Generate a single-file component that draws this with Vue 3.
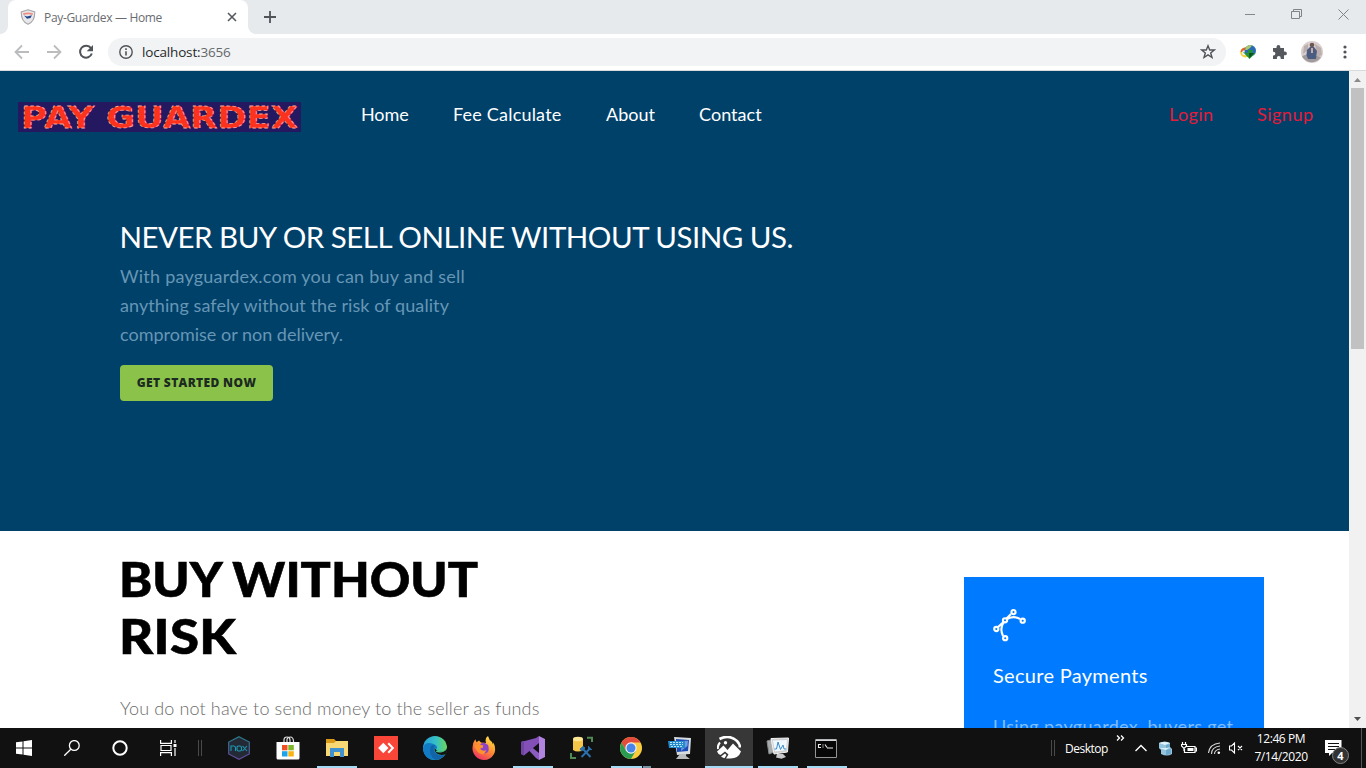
<script setup>
const nav = [
  { label: 'Home', cls: 'n-home' },
  { label: 'Fee Calculate', cls: 'n-fee' },
  { label: 'About', cls: 'n-about' },
  { label: 'Contact', cls: 'n-contact' }
]
</script>

<template>
  <div class="screen">
    <div class="tabstrip">
      <div class="lead"></div>
      <div class="tab">
        <svg class="fav" width="16" height="16" viewBox="0 0 16 16">
          <path d="M8 .8 14.8 3C14.8 9 13 13.300 8 15.300 3 13.300 1.200 9 1.200 3Z" fill="#e8e8ea" stroke="#a6a6a9" stroke-width="1.100" />
          <path d="M3 4.300Q8 2.500 13 4.300L12.500 6Q8 4.500 3.500 6Z" fill="#ef8d85" />
          <path d="M4 6.500 7 7.500 12 6.300 10.500 9 7 9.800Z" fill="#21468c" />
        </svg>
        <span class="tabtitle">Pay-Guardex — Home</span>
        <svg class="tabclose" width="10" height="10" viewBox="0 0 10 10"><path d="M1 1 9 9M9 1 1 9" stroke="#55585c" stroke-width="1.600" /></svg>
      </div>
      <div class="trail">
        <svg class="plus" width="12" height="12" viewBox="0 0 12 12"><path d="M6 0V12M0 6H12" stroke="#505357" stroke-width="1.800" /></svg>
        <div class="wincontrols">
          <svg width="10" height="10" viewBox="0 0 10 10"><path d="M0 5.500H10" stroke="#85888b" /></svg>
          <svg width="11" height="11" viewBox="0 0 11 11" fill="none" stroke="#808386"><path d="M.5 2.500H8.500V9.500H.5ZM2.500 2.500V.5H10.500V7.500H8.500" /></svg>
          <svg width="11" height="11" viewBox="0 0 11 11"><path d="M.5 .5 10.500 10.500M10.500 .5 .5 10.500" stroke="#808386" /></svg>
        </div>
      </div>
    </div>

    <div class="toolbar">
      <div class="navicons">
        <svg width="16" height="16" viewBox="0 0 16 16" fill="none" stroke="#babcbe" stroke-width="1.800"><path d="M15 8H2M8 1.500 1.500 8 8 14.500" /></svg>
        <svg width="16" height="16" viewBox="0 0 16 16" fill="none" stroke="#babcbe" stroke-width="1.800"><path d="M1 8H14M8 1.500 14.500 8 8 14.500" /></svg>
        <svg width="16" height="16" viewBox="0 0 16 16"><path d="M13 4.200A6 6 0 1 0 13.800 9.500" fill="none" stroke="#505357" stroke-width="2" /><path d="M15 1V7.300H8.700Z" fill="#505357" /></svg>
      </div>
      <div class="omnibox">
        <svg width="14" height="14" viewBox="0 0 14 14"><circle cx="7" cy="7" r="6.200" fill="none" stroke="#505357" stroke-width="1.400" /><path d="M7 6.200V10.500M7 3.300V4.900" stroke="#505357" stroke-width="1.600" /></svg>
        <span class="url">localhost:<i>3656</i></span>
        <svg class="star" width="16" height="16" viewBox="0 0 16 16"><path d="M8 1.800 9.700 6H14.300L10.700 8.900 12 13.500 8 10.900 4 13.500 5.300 8.900 1.700 6H6.300Z" fill="none" stroke="#505357" stroke-width="1.400" /></svg>
      </div>
      <div class="exts">
        <svg width="16" height="16" viewBox="0 0 16 16">
          <circle cx="5.300" cy="8.500" r="5" fill="#f2d23a" /><path d="M.5 8A5 5 0 0 1 7 3.700L5 8Z" fill="#e5602f" /><circle cx="4.500" cy="8.800" r="2.500" fill="#e9f3f7" />
          <circle cx="10.300" cy="6.800" r="5.700" fill="#2c69b3" /><path d="M6 3Q9 0 12 1.500L10 4 7 6 5 6Z" fill="#a7c970" /><path d="M3 8 8 9 8 6H13L12.500 9H15.500L9.500 15Z" fill="#229238" /><path d="M9 9 14 9 9.500 14Z" fill="#0d5120" />
        </svg>
        <svg width="16" height="16" viewBox="0 0 16 16"><path d="M1 4H4.500V3A1.900 1.900 0 0 1 8.300 3V4H12V7.500H13A1.900 1.900 0 0 1 13 11.300H12V15H8.700V14A1.900 1.900 0 0 0 4.900 14V15H1V11.500H1.500A1.900 1.900 0 0 0 1.500 7.700H1Z" fill="#55595e" /></svg>
        <svg width="22" height="22" viewBox="0 0 22 22">
          <circle cx="11" cy="11" r="11" fill="#d8cfce" /><path d="M3 5 7 3V9L2 13ZM14 3 20 7 21 14 16 16Z" fill="#bcaead" /><path d="M1 15 7 13 16 15 20 16A11 11 0 0 1 2 17Z" fill="#a19a9d" /><path d="M6 9 9 6 13 6 16 10 15 18 7 18 5.500 14Z" fill="#4a5c82" /><circle cx="11" cy="4" r="2.300" fill="#6d5752" /><path d="M10 7H12V12H10Z" fill="#c9aba2" />
        </svg>
        <svg width="4" height="14" viewBox="0 0 4 14" fill="#505357"><circle cx="2" cy="2" r="1.600" /><circle cx="2" cy="7" r="1.600" /><circle cx="2" cy="12" r="1.600" /></svg>
      </div>
    </div>

    <div class="viewport">
      <div class="page">
        <section class="hero">
          <header class="menu">
            <svg class="logo" width="283" height="30" viewBox="0 0 283 30">
              <rect width="283" height="30" fill="#241861" />
              <g class="logotext">
                <text x="3" y="26" textLength="73" lengthAdjust="spacingAndGlyphs">PAY</text>
                <text x="88" y="26" textLength="192" lengthAdjust="spacingAndGlyphs">GUARDEX</text>
              </g>
            </svg>
            <nav>
              <a v-for="n in nav" :key="n.label" :class="n.cls">{{ n.label }}</a>
            </nav>
            <div class="auth"><a class="login">Login</a><a class="signup">Signup</a></div>
          </header>
          <div class="pitch">
            <h1>NEVER BUY OR SELL ONLINE WITHOUT USING US.</h1>
            <p class="p1">With payguardex.com you can buy and sell</p>
            <p class="p2">anything safely without the risk of quality</p>
            <p class="p3">compromise or non delivery.</p>
            <button><span>GET STARTED NOW</span></button>
          </div>
        </section>
        <section class="content">
          <div class="risk">
            <h2><span class="h2a">BUY WITHOUT</span><br><span class="h2b">RISK</span></h2>
            <p>You do not have to send money to the seller as funds</p>
          </div>
          <div class="card">
            <svg width="34" height="34" viewBox="0 0 34 34" fill="none" stroke="#fff" stroke-width="2.100">
              <path d="M5 18 10.500 13M13.500 9.500 18 5M13.500 10.500Q20 6 27 10M10.500 13.500Q6.500 20 10 27" />
              <circle cx="3.300" cy="20" r="2.100" /><circle cx="12" cy="11.300" r="2.100" /><circle cx="20.500" cy="3.100" r="2.100" /><circle cx="29.700" cy="11.700" r="2.100" /><circle cx="12.200" cy="29.200" r="2.100" />
            </svg>
            <h3>Secure Payments</h3>
            <p>Using payguardex, buyers get</p>
          </div>
        </section>
      </div>
      <div class="scrollbar">
        <svg width="17" height="17" viewBox="0 0 17 17"><path d="M5 11 8.500 7 12 11Z" fill="#8b8b8b" /></svg>
        <div class="thumb"></div>
        <svg class="down" width="17" height="17" viewBox="0 0 17 17"><path d="M5 6 8.500 10 12 6Z" fill="#505050" /></svg>
      </div>
    </div>

    <div class="taskbar">
      <div class="sys">
        <span><svg width="16" height="16" viewBox="0 0 16 16" fill="#fff"><path d="M0 2.300 6.500 1.400V7.500H0ZM7.500 1.200 16 0V7.500H7.500ZM0 8.500H6.500V14.600L0 13.700ZM7.500 8.500H16V16L7.500 14.800Z" /></svg></span>
        <span><svg width="16" height="16" viewBox="0 0 16 16" fill="none" stroke="#fff" stroke-width="1.300"><circle cx="10.300" cy="5.500" r="4.900" /><path d="M6.800 9.200 .3 15.700" /></svg></span>
        <span><svg width="16" height="16" viewBox="0 0 16 16"><circle cx="8" cy="8" r="6.700" fill="none" stroke="#fff" stroke-width="2" /></svg></span>
        <span><svg width="17" height="16" viewBox="0 0 17 16" fill="none" stroke="#fff" stroke-width="1.200"><path d="M.6 0V3.400H11.400V0M.6 16V12.600H11.400V16M1 5.500H11V10.500H1ZM15 0V3M15 8V16" /><path d="M13.500 4H16.500V7H13.500Z" fill="#fff" stroke="none" /></svg></span>
        <i class="grip"></i>
      </div>
      <div class="apps">
        <span><svg width="22" height="24" viewBox="0 0 22 24"><defs><linearGradient id="nx" y2="1" x2="0"><stop stop-color="#287f8c" /><stop offset="1" stop-color="#65479d" /></linearGradient></defs><path d="M11 .7 21.300 6V18L11 23.300 .7 18V6Z" fill="#242936" stroke="url(#nx)" stroke-width="1.200" /><path d="M3 15V10H6Q7.500 10 7.500 12V15M9 11Q9 10 10.500 10H12Q13.500 10 13.500 12V13.500Q13.500 15 12 15H10.500Q9 15 9 13.500ZM14.500 10 19 15M19 10 14.500 15" fill="none" stroke="#1a9cb4" stroke-width="1.100" /></svg></span>
        <span class="store"><svg width="24" height="24" viewBox="0 0 24 24"><path d="M8 7V4Q8 1 11 1T14 4V7M11 7V3Q12 1 14.500 1T17.500 5V7" fill="none" stroke="#ddd" stroke-width="1.200" /><path d="M.5 6H23.500V22Q23.500 23.500 22 23.500H2Q.5 23.500 .5 22Z" fill="#fff" /><path d="M6 9H11.500V14.300H6Z" fill="#ee5123" /><path d="M12.300 9H17.800V14.300H12.300Z" fill="#7eb92b" /><path d="M6 15.200H11.500V20.500H6Z" fill="#1ba5e8" /><path d="M12.300 15.200H17.800V20.500H12.300Z" fill="#f9b414" /></svg></span>
        <span class="run"><svg width="22" height="20" viewBox="0 0 22 20"><path d="M0 1H8L10 3H21V18H0Z" fill="#d99a18" /><path d="M0 5H8L10 3H22V18H0Z" fill="#f8d775" /><path d="M4 10H18V19H14V14H8V19H4Z" fill="#3f91d0" /></svg></span>
        <span><svg width="24" height="24" viewBox="0 0 24 24"><path d="M0 0H24V24H0Z" fill="#f94639" /><path d="M9.300 6.800 14.500 12 9.300 17.200 4.100 12ZM13.500 8 15 6.500 20.200 12 15 17.500 13.500 16 17.400 12Z" fill="#fff" /></svg></span>
        <span><svg width="24" height="24" viewBox="0 0 24 24"><defs><linearGradient id="ed" x2="1"><stop stop-color="#249edb" /><stop offset=".55" stop-color="#37c1c5" /><stop offset="1" stop-color="#6bd85b" /></linearGradient></defs><circle cx="12" cy="12" r="12" fill="url(#ed)" /><path d="M0 12Q2 5.500 9 7.500 15 9 14 13 13 12 11.700 12.500 11 17 16 19 20 20 22.500 18 18 24 12 24 1 24 0 12Z" fill="#117bc3" /><path d="M8 10Q4.500 20 13 23.900 19.500 23.300 22.500 18 20 20 16 19 10 17 10.500 12 11 10.300 12.500 9.700 10 8.500 8 10Z" fill="#1264a9" /><path d="M11.700 12Q13.800 15.300 18 15.600 22.500 15.500 24 12V15L22.600 18.300Q19 19.500 16 18.600 11 16.500 11.700 12Z" fill="#111" /><path d="M12.800 15.700Q15 17 19 16.200 23 15.300 24 12Q23 14.500 20 15Q15 15.600 14 14Z" fill="#4cc585" /></svg></span>
        <span><svg width="24" height="24" viewBox="0 0 24 24"><defs><linearGradient id="ff" x1=".8" x2=".25" y2="1"><stop stop-color="#ffe94d" /><stop offset=".45" stop-color="#ff9630" /><stop offset="1" stop-color="#ec2e65" /></linearGradient></defs><path d="M12 24A11.500 11.500 0 0 1 .6 11Q1 6 3.300 3.300L4.500 6.300 7 4.500 9 6.500 14 7Q12.500 2 16 0 17 4 20 6L21 8.500 21.500 6.500Q24.500 13 22 18 18.500 24 12 24Z" fill="url(#ff)" /><path d="M7 13Q6.500 7.500 12 6.500L16 9Q18.500 16 13 17.500 8 18 7 13Z" fill="#8b43c7" /><path d="M2 9 7 8.500 11.500 9.500 10.500 12 8 12.500Q9 15.500 14.500 14.300L12 18Q5.500 19.500 2 9Z" fill="#ff922d" /></svg></span>
        <span class="run"><svg width="24" height="24" viewBox="0 0 24 24"><path d="M0 6 3 5 18 17V24L15 22Z" fill="#8a5cc0" /><path d="M0 6 3 8.500V15.500L0 18 3 19.500 18 7V0L15 2Z" fill="#8350b8" /><path d="M0 6 3 5V19.500L0 18Z" fill="#7044a1" /><path d="M18 0 24 3V21L18 24Z" fill="#b083df" /></svg></span>
        <span><svg width="24" height="24" viewBox="0 0 24 24"><path d="M3 3V14Q7.500 17 13 14V3Z" fill="#f5c547" /><ellipse cx="8" cy="3" rx="5" ry="2.300" fill="#ffe891" /><path d="M17 1.700H22V6M1 17V22H6" fill="none" stroke="#4f8a54" stroke-width="2" /><path d="M12 12 20.500 21M20 12.500 11.500 21" stroke="#2b70ad" stroke-width="2" /><path d="M10 13 13 10.500 15 12 11.500 15ZM18.500 10V13.500H22" fill="#2b70ad" stroke="#2b70ad" stroke-width="1" /></svg></span>
        <span class="run multi"><svg width="24" height="24" viewBox="0 0 24 24"><circle cx="12" cy="12" r="11" fill="#f9cd3d" /><path d="M2.500 6.500A11 11 0 0 1 21.500 6.500H12L7.200 14.700Z" fill="#e34b3d" /><path d="M2.500 6.500 7.200 14.700 16.700 14.700 12 23A11 11 0 0 1 2.500 6.500Z" fill="#2a9c51" /><circle cx="12" cy="12" r="5.700" fill="#f3f3f3" /><circle cx="12" cy="12" r="4.500" fill="#4885e9" /></svg></span>
        <span><svg width="24" height="24" viewBox="0 0 24 24"><path d="M6 1 23 2 22 18 9 19Z" fill="#d7dce1" /><path d="M8 3 21 4 20 15 9 16Z" fill="#1c4bb5" /><path d="M14 5 20 4.800 19.500 10 13 15Z" fill="#6c9be2" /><path d="M0 5H17V12H1Z" fill="#258bcc" /><path d="M2 6.500H15M2 8.500H15M3 10.500H14" stroke="#b7e4fa" stroke-width="1" stroke-dasharray="2 1" /><path d="M12 18H18V20L22 23H8Z" fill="#b9bcbe" /></svg></span>
        <span class="run active"><svg width="24" height="24" viewBox="0 0 24 24"><path d="M2.500 3Q12-2 20 5 23 8 23 11.500" stroke="#fff" stroke-width="2.600" fill="none" /><path d="M1 13Q.3 9.500 3 6.500" stroke="#fff" stroke-width="2" fill="none" /><path d="M0 15.500 6.500 9.500 10.500 14 16 7.500 24 15.500Q21.500 22.500 13.500 22.500H9L11.500 18.500 8 15.500 3.500 19Q1 18 0 15.500Z" fill="#fff" /><path d="M4 20.500 8 17.500 9.500 19 7.500 22.300Q5.500 21.800 4 20.500Z" fill="#fff" /><circle cx="8.500" cy="6.800" r="1.700" fill="#fff" /></svg></span>
        <span class="run"><svg width="24" height="22" viewBox="0 0 24 22"><path d="M1 4 8 2V15L3 17Z" fill="#a9acac" stroke="#85898b" /><path d="M5 1.500 22.500 1 21.500 15 8 17Z" fill="#cfd2d2" stroke="#f4f4f4" /><path d="M7 3.500 21 3 20 13 9 14.500Z" fill="#f1f8ff" /><path d="M8.500 12H10.500L12 5 14.500 12.500 17 8 18 12H20" fill="none" stroke="#388dcb" /><path d="M11 17H17L20 20 15.500 21.800 10 20.500Z" fill="#c7c9ca" /></svg></span>
        <span class="run cmd"><svg width="22" height="19" viewBox="0 0 22 19"><path d="M.5 .5H21.500V18.500H.5Z" fill="#070707" stroke="#959595" /><path d="M1 .5H21V2H1Z" fill="#d4d7d9" /><path d="M6 5.500H3.500V8.500H6M8 5.500V6.500M8 7.500V8.500M10 5.500 12 8.500M12 9H18" fill="none" stroke="#eee" stroke-width="1.100" /></svg></span>
      </div>
      <div class="tray">
        <i class="grip"></i>
        <span class="desktop">Desktop</span>
        <svg class="chev" width="9" height="6" viewBox="0 0 9 6" fill="none" stroke="#fff" stroke-width="1.300"><path d="M1 .5 3.500 3 1 5.500M5 .5 7.500 3 5 5.500" /></svg>
        <svg class="up" width="12" height="8" viewBox="0 0 12 8" fill="none" stroke="#fff" stroke-width="1.400"><path d="M.5 7 6 1.500 11.500 7" /></svg>
        <svg class="db" width="14" height="15" viewBox="0 0 14 15"><path d="M1 2Q7-1 12 2V6L14 8V13Q9 16 3 13V9L1 7Z" fill="#94c5df" /><path d="M1 2Q6 0 12 2L7 4ZM1 7H7L12 6 8 9Z" fill="#e0f4fd" /><path d="M8 4V7L12 6V3ZM8 9V14L13 13V8Z" fill="#6da9ca" /></svg>
        <svg class="bat" width="16" height="12" viewBox="0 0 16 12" fill="none" stroke="#fff" stroke-width="1.200"><path d="M5 4.500H14V10.500H3.500V7M14 6H15.500V9H14M1.500 0V2M4.500 0V2M.5 2.500H5.500V4L3.500 6H2.500L.5 4ZM3 6V9" /><path d="M6.500 6H12.500V9H6.500Z" fill="#fff" stroke="none" /></svg>
        <svg class="wifi" width="13" height="13" viewBox="0 0 13 13" fill="none" stroke="#d8d8d8" stroke-width="1.100"><path d="M.5 11Q1.500 2 12 1M3.500 12Q3.500 5 12 4M6.500 12Q6.500 8 12 7" /><circle cx="10.800" cy="10.800" r="1.300" fill="#fff" stroke="none" /></svg>
        <svg class="vol" width="14" height="12" viewBox="0 0 14 12" fill="none" stroke="#fff" stroke-width="1.100"><path d="M.5 4H2.500L5.500 1V11L2.500 8H.5ZM9 4 13 8M13 4 9 8" /></svg>
        <div class="clock"><span class="time">12:46 PM</span><span class="date">7/14/2020</span></div>
        <div class="notif">
          <svg width="17" height="16" viewBox="0 0 17 16"><path d="M0 0H16.500V13H7L4 16V13H0Z" fill="#fff" /><path d="M3 3.500H14M3 6.500H14M3 9.500H10" stroke="#111" /></svg>
          <b>4</b>
        </div>
        <i class="edge"></i>
      </div>
    </div>
  </div>
</template>

<style>
body { margin: 0; overflow: hidden; }
</style>

<style scoped>
* { box-sizing: border-box; }
svg { display: block; flex: none; }
h1, h2, h3, p { margin: 0; font-weight: 400; white-space: nowrap; }
.screen { width: 1366px; height: 768px; display: flex; flex-direction: column; overflow: hidden; background: #fff; font-family: "Open Sans", sans-serif; }
.tabstrip { height: 34px; display: flex; background: #fff; flex: none; }
.lead { width: 8px; background: #e7eaed; border-bottom-right-radius: 8px; }
.tab { width: 240px; background: #fff; display: flex; align-items: center; padding-left: 12px; border-radius: 8px 8px 0 0; box-shadow: 0 -8px 0 #e7eaed; }
.tabtitle { width: 180px; margin-left: 8px; font-size: 12px; color: #696c6f; letter-spacing: -.33px; white-space: nowrap; }
.tabclose { margin-left: 3px; }
.trail { flex: 1; background: #e7eaed; border-bottom-left-radius: 8px; display: flex; justify-content: space-between; }
.plus { margin: 11px 0 0 16px; }
.wincontrols { display: flex; gap: 36px; margin: 9px 17px 0 0; }
.toolbar { height: 37px; flex: none; display: flex; align-items: center; border-bottom: 1px solid #d8dadc; padding-left: 14px; }
.navicons { display: flex; gap: 16px; width: 94px; }
.omnibox { width: 1118px; height: 28px; border-radius: 14px; background: #f1f3f4; display: flex; align-items: center; padding: 0 10px 0 11px; }
.url { margin-left: 9px; font-size: 13.500px; letter-spacing: -.17px; color: #27292b; }
.url i { font-style: normal; color: #65686b; }
.star { margin-left: auto; }
.exts { display: flex; align-items: center; margin-left: 14px; }
.exts svg:nth-child(2) { margin-left: 16px; }
.exts svg:nth-child(3) { margin-left: 13px; }
.exts svg:nth-child(4) { margin-left: 20px; }

.viewport { height: 657px; flex: none; display: flex; overflow: hidden; }
.page { width: 1349px; height: 657px; overflow: hidden; font-family: Lato, sans-serif; }
.hero { height: 460px; background: #00416a; }
.menu { height: 92px; display: flex; align-items: center; padding-left: 18px; }
.logo { overflow: visible; }
.logotext { font-family: "DejaVu Sans", sans-serif; font-weight: 700; font-size: 30px; fill: #fb321d; stroke: #f6a49c; stroke-width: .8px; stroke-dasharray: 3 2; }
nav { display: flex; margin-left: 60px; font-size: 18px; color: #fff; line-height: 26px; white-space: nowrap; position: relative; top: -3px; }
.n-home { width: 92px; letter-spacing: -.1px; }
.n-fee { width: 153px; letter-spacing: .2px; }
.n-about { width: 93px; letter-spacing: 0; }
.n-contact { width: 70px; letter-spacing: .05px; }
.auth { margin-left: auto; display: flex; font-size: 18px; line-height: 26px; color: #e41b3b; position: relative; top: -3px; }
.login { width: 88px; letter-spacing: .4px; }
.signup { width: 92px; letter-spacing: .5px; }
.pitch { padding: 54px 0 0 120px; }
h1 { font-size: 29.500px; line-height: 40px; color: #fff; letter-spacing: -.5px; margin-left: -.5px; }
.pitch p { font-size: 18px; line-height: 29px; color: #6796b5; }
.pitch h1 + p { margin-top: 5px; }
.p1 { letter-spacing: .23px; }
.p2 { letter-spacing: .08px; }
button { display: flex; align-items: center; justify-content: center; margin-top: 16px; width: 153px; height: 36px; border: 0; border-radius: 4px; padding: 0 0 2px; background: #8bc34a; color: #1c2a21; font: 800 12px "Open Sans", sans-serif; letter-spacing: .35px; white-space: nowrap; }
.content { display: flex; justify-content: space-between; padding: 0 85px 0 120px; }
.risk { padding-top: 20px; }
h2 { font-weight: 900; font-size: 48px; line-height: 57px; color: #000; margin-top: -1px; margin-left: -1px; -webkit-text-stroke: .6px #000; }
.h2a, .h2b { display: inline-block; transform-origin: left; }
.h2a { transform: scaleX(1.045); }
.h2b { transform: scaleX(1.1); letter-spacing: .3px; }
.risk p { margin-top: 30px; font-size: 18px; line-height: 29px; color: #6c6c6c; font-weight: 300; letter-spacing: .14px; }
.card { width: 300px; height: 240px; margin-top: 46px; background: #007bff; padding: 32px 29px; color: #fff; }
.card h3 { margin-top: 19px; font-size: 20px; line-height: 26px; letter-spacing: .3px; }
.card p { margin-top: 24px; font-size: 18px; line-height: 29px; color: #80bdff; letter-spacing: .33px; }
.scrollbar { width: 17px; background: #f1f1f1; display: flex; flex-direction: column; align-items: center; }
.thumb { width: 13px; height: 261px; background: #c1c1c1; }
.down { margin-top: auto; }

.taskbar { height: 40px; flex: none; display: flex; background: #111; color: #fff; }
.sys { display: flex; align-items: center; width: 215px; }
.sys span { width: 48px; display: flex; justify-content: center; }
.grip { width: 4px; height: 16px; border: solid #4a4a4a; border-width: 0 1px; margin-left: 6px; }
.apps { display: flex; gap: 1px; }
.apps span { width: 48px; height: 40px; display: flex; align-items: center; justify-content: center; }
.apps .store { padding-right: 1px; }
.apps .cmd { padding-right: 2px; }
.run { background: linear-gradient(#a5daf5, #a5daf5) center bottom / 40px 2px no-repeat; }
.multi { background: linear-gradient(90deg, #a5daf5 31px, #111 31px, #111 32px, #7393a3 32px) center bottom / 40px 2px no-repeat; }
.active { background: linear-gradient(#a5daf5, #a5daf5) center bottom / 48px 2px no-repeat #373737; }
.tray { margin-left: auto; width: 315px; height: 40px; display: flex; align-items: center; font-size: 12px; }
.tray .grip { margin-left: 0; }
.desktop { width: 51px; margin-left: 10px; letter-spacing: -.5px; }
.chev { margin-bottom: 20px; }
.up { margin-left: 10px; }
.db { margin-left: 11px; }
.bat { margin-left: 9px; }
.wifi { margin-left: 11px; }
.vol { margin-left: 8px; }
.clock { width: 76px; display: flex; flex-direction: column; align-items: center; line-height: 18px; letter-spacing: -.4px; white-space: nowrap; }
.notif { position: relative; margin-left: 6px; }
.notif b { position: absolute; left: 7px; top: 7px; width: 17px; height: 17px; border-radius: 50%; border: 1px solid #858585; background: #333; font-size: 11px; line-height: 15px; text-align: center; }
.edge { margin-left: auto; margin-right: 4px; width: 1px; height: 40px; background: #555; }
</style>
